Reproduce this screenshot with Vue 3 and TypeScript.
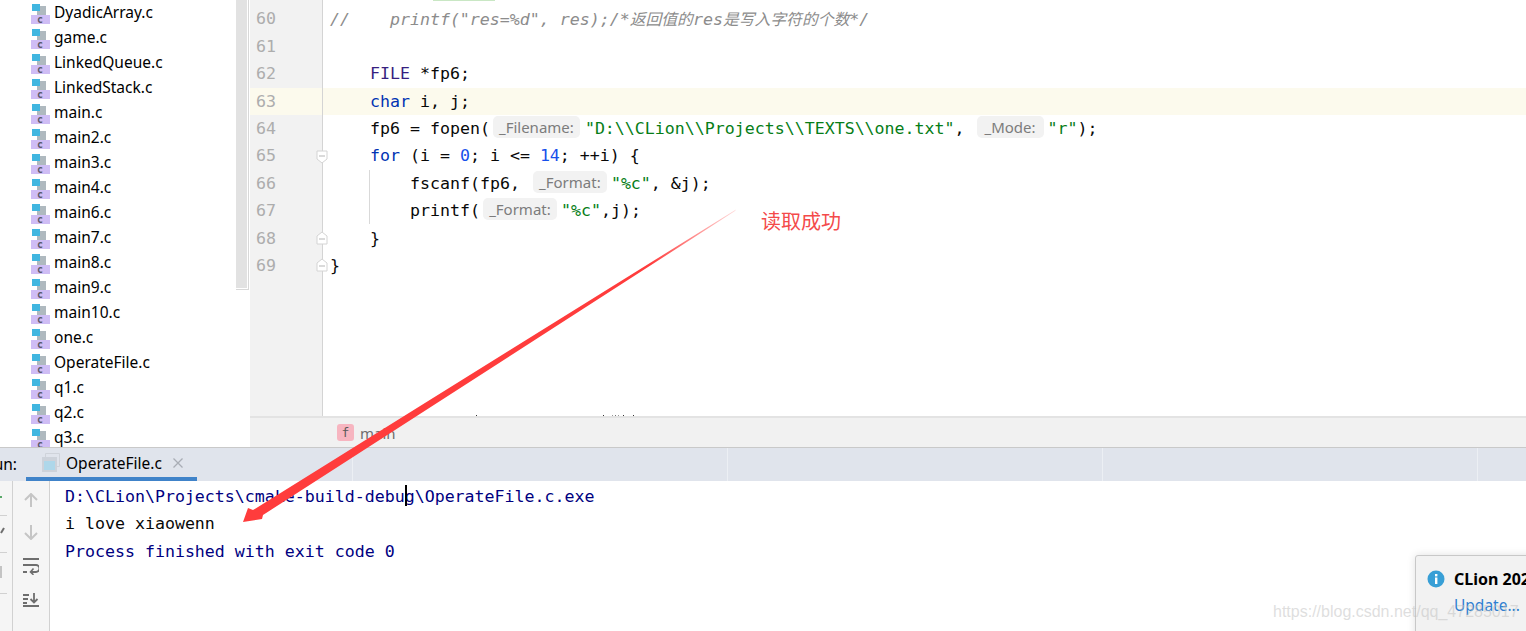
<script setup lang="ts">
const files: string[] = ['DyadicArray.c','game.c','LinkedQueue.c','LinkedStack.c','main.c','main2.c','main3.c','main4.c','main6.c','main7.c','main8.c','main9.c','main10.c','one.c','OperateFile.c','q1.c','q2.c','q3.c']
const lineNumbers: number[] = [60,61,62,63,64,65,66,67,68,69]
const cols: number[] = [1,2,3]
</script>

<template>
  <div class="app">
    <div class="top">
      <aside class="tree">
        <div v-for="f in files" :key="f" class="file">
          <svg class="ficon" width="20" height="22" viewBox="0 0 20 22">
            <rect x="6" y="3" width="9" height="9" fill="#afb9bf"/>
            <rect x="1" y="1" width="8" height="7" fill="#40b6e0"/>
            <rect x="0" y="12" width="19" height="9" fill="#cfbdf5"/>
            <text x="6" y="20" class="cletter">c</text>
          </svg>
          <span>{{ f }}</span>
        </div>
      </aside>
      <div class="scrollcol"><div class="thumb"></div></div>
      <main class="editorwrap">
        <div class="editor">
          <div class="gutter">
            <div v-for="n in lineNumbers" :key="n" class="num" :class="{ cur: n === 63 }">
              {{ n }}
              <svg v-if="n === 65" class="fold open" width="12" height="14" viewBox="0 0 12 14"><path d="M1 1h10v8l-5 4-5-4z" fill="#fff" stroke="#d4d4d4"/><path d="M3 6h6" stroke="#b5b5b5"/></svg>
              <svg v-if="n === 68 || n === 69" class="fold" width="12" height="14" viewBox="0 0 12 14"><path d="M1 13h10V5L6 1 1 5z" fill="#fff" stroke="#d4d4d4"/><path d="M3 8h6" stroke="#b5b5b5"/></svg>
            </div>
          </div>
          <div class="code">
            <div class="greenmark"></div>
            <div class="guide"></div>
            <i class="remnant"></i>
            <div class="ln cm">//&nbsp;&nbsp;&nbsp;&nbsp;printf("res=%d", res);/*<span class="cjk">返回值的</span>res<span class="cjk">是写入字符的个数</span>*/</div>
            <div class="ln"></div>
            <div class="ln i1"><span class="ty">FILE</span> *fp6;</div>
            <div class="ln i1 cur"><span class="kw">char</span> i, j;</div>
            <div class="ln i1">fp6 = fopen(<span class="hint h1">_Filename:</span><span class="st">"D:\\CLion\\Projects\\TEXTS\\one.txt"</span>,&nbsp;<span class="hint h2">_Mode:</span><span class="st">"r"</span>);</div>
            <div class="ln i1"><span class="kw">for</span> (i = <span class="nu">0</span>; i &lt;= <span class="nu">14</span>; ++i) {</div>
            <div class="ln i2">fscanf(fp6,&nbsp;<span class="hint h3">_Format:</span><span class="st">"%c"</span>, &amp;j);</div>
            <div class="ln i2">printf(<span class="hint h4">_Format:</span><span class="st">"%c"</span>,j);</div>
            <div class="ln i1">}</div>
            <div class="ln">}</div>
          </div>
        </div>
        <div class="crumb">
          <span class="fbadge">f</span>
          <span class="crumbtext">main</span>
        </div>
      </main>
    </div>

    <section class="tool">
      <header class="toolhead">
        <span class="runlabel">Run:</span>
        <div class="tab">
          <svg width="18" height="19" viewBox="0 0 18 19"><path d="M3.500 4V0.500h14v13H14" fill="none" stroke="#cfd3da"/><rect x="0" y="4" width="15" height="15" fill="#cdd2da"/><rect x="2" y="8" width="11" height="9" fill="#aed7ea"/></svg>
          <span class="tabname">OperateFile.c</span>
          <svg class="tabx" width="12" height="12" viewBox="0 0 12 12"><path d="M1.500 1.500l9 9M10.500 1.500l-9 9" stroke="#a9adb5" stroke-width="1.300"/></svg>
        </div>
        <div class="cellfirst"></div>
        <div v-for="c in cols" :key="c" class="cell"></div>
      </header>
      <div class="toolbody">
        <div class="strip">
          <i class="sep s1"></i><i class="sep s2"></i><i class="sep s3"></i>
          <svg class="stripicons" width="12" height="150" viewBox="0 0 12 150"><path d="M0 16h2" stroke="#59a869" stroke-width="2"/><path d="M1 52l3-5" stroke="#6e6e6e" stroke-width="2"/><rect x="0" y="85" width="2" height="12" fill="#c4c4c4"/></svg>
        </div>
        <div class="actions">
          <svg width="14" height="14" viewBox="0 0 14 14"><path d="M7 14V1.500M1 7l6-6 6 6" fill="none" stroke="#c5c5c5" stroke-width="2"/></svg>
          <svg width="14" height="15" viewBox="0 0 14 15"><path d="M7 0v13.500M1 8l6 6 6-6" fill="none" stroke="#c5c5c5" stroke-width="2"/></svg>
          <svg width="16" height="18" viewBox="0 0 16 18"><path d="M0 2h16M0 8h13a2.500 2.500 0 0 1 0 7H8M0 15h4" fill="none" stroke="#6e6e6e" stroke-width="2"/><path d="M10.500 11.500L7.500 15l3 2.800" fill="none" stroke="#6e6e6e" stroke-width="1.600"/></svg>
          <svg width="16" height="14" viewBox="0 0 16 14"><path d="M0 2h6M0 6h5M0 10h4M0 13h16M11 0v9M7.500 6l3.500 3.500L14.500 6" fill="none" stroke="#6e6e6e" stroke-width="1.800"/></svg>
        </div>
        <div class="console">
          <div class="out sys">D:\CLion\Projects\cmake-build-debug\OperateFile.c.exe</div>
          <div class="out">i love xiaowenn</div>
          <div class="out sys">Process finished with exit code 0</div>
          <i class="caret"></i>
        </div>
      </div>
    </section>

    <div class="toast">
      <div class="toasthead">
        <svg class="infoicon" width="18" height="18" viewBox="0 0 18 18"><circle cx="9" cy="9" r="8.500" fill="#389fd6"/><rect x="8" y="7.500" width="2.400" height="6.500" fill="#fff"/><rect x="8" y="4" width="2.400" height="2.400" fill="#fff"/></svg>
        <b>CLion 2020.3</b>
      </div>
      <a class="update">Update...</a>
    </div>

    <svg class="arrow" width="1526" height="631" viewBox="0 0 1526 631">
      <defs>
        <linearGradient id="ag" gradientUnits="userSpaceOnUse" x1="735" y1="210" x2="650" y2="265">
          <stop offset="0" stop-color="#ff3c3c" stop-opacity="0.2"/>
          <stop offset="1" stop-color="#ff3c3c"/>
        </linearGradient>
      </defs>
      <path d="M736 209.500 L735 211 L263 515 L262 519 L243 522 L248 508 L253 510 Z" fill="url(#ag)"/>
    </svg>
    <div class="note">读取成功</div>
    <div class="wm">https://blog.csdn.net/qq_47285017</div>
  </div>
</template>

<style>
html, body { margin: 0; background: #fff; }
</style>

<style scoped>
.app { position: relative; width: 1526px; height: 631px; overflow: hidden; background: #fff; font-family: "Noto Sans", "Open Sans", sans-serif; color: #000; }
.top { display: flex; height: 447px; }
.tree { width: 236px; flex: none; height: 447px; overflow: hidden; font-size: 15.5px; }
.file { display: flex; align-items: center; height: 25px; padding-left: 31px; gap: 3px; line-height: 25px; }
.ficon { flex: none; margin-top: 2px; }
.cletter { font: 700 10px "DejaVu Sans Mono", monospace; fill: #5a5a6a; }
.scrollcol { width: 14px; flex: none; background: #fff; }
.thumb { box-sizing: border-box; height: 290px; width: 13px; padding: 0 1px 1px 0; background: #e2e2e2; background-clip: content-box; border-right: 1px solid #d8d8d8; border-bottom: 1px solid #d8d8d8; }
.editorwrap { flex: 1; min-width: 0; display: flex; flex-direction: column; }
.editor { flex: none; height: 416px; display: flex; font: 16.6px/27.42px "DejaVu Sans Mono", monospace; overflow: hidden; }
.gutter { width: 72px; flex: none; background: #f2f2f2; border-right: 1px solid #d4d4d4; padding-top: 5.45px; color: #adadad; }
.num { position: relative; height: 27.42px; padding-left: 6px; }
.num.cur { background: #fcfaed; }
.fold { position: absolute; right: -6px; top: 6px; }
.fold.open { top: 8px; }
.code { position: relative; flex: 1; padding-top: 5.45px; white-space: nowrap; color: #080808; }
.greenmark { position: absolute; left: 110px; top: 0; width: 62px; height: 1px; background: #c9e7c4; }
.guide { position: absolute; left: 46px; top: 170px; width: 1px; height: 54px; background: #d9d9d9; }
.remnant { position: absolute; left: 153px; top: 415px; width: 1px; height: 1px; background: #333; box-shadow: 127px 0 #333, 136px 0 #999, 139px 0 #777, 142px 0 #999, 147px 0 #333, 157px 0 #333; }
.ln { height: 27.42px; padding-left: 7px; }
.ln.i1 { padding-left: 47px; }
.ln.i2 { padding-left: 87px; }
.ln.cur { background: #fcfaed; }
.cm { color: #8c8c8c; font-style: italic; }
.cjk { font-family: "Noto Sans CJK SC", sans-serif; font-size: 15.8px; }
.ty { color: #371f80; }
.kw { color: #0033b3; }
.nu { color: #1750eb; }
.st { color: #067d17; }
.hint { display: inline-block; font: 15px/22px "Noto Sans", sans-serif; color: #7c7c7c; background: #f2f2f2; border-radius: 5px; height: 22px; vertical-align: 1px; text-align: center; }
.h1 { width: 87px; margin: 0 5px 0 3px; }
.h2 { width: 67px; margin: 0 4px 0 2px; }
.h3 { width: 74px; margin: 0 4px 0 3px; }
.h4 { width: 74px; margin: 0 4px 0 3px; }
.crumb { flex: 1; background: #f1f1f1; border-top: 2px solid #e3e3e3; display: flex; align-items: center; padding-left: 87px; gap: 6px; }
.fbadge { width: 17px; height: 17px; border-radius: 3px; background: #f7b5c0; color: #5a5a5a; font: 13px/17px "DejaVu Sans Mono", monospace; text-align: center; }
.crumbtext { color: #6e6e6e; font-size: 15px; }
.tool { height: 184px; display: flex; flex-direction: column; }
.toolhead { height: 34px; flex: none; box-sizing: border-box; background: #e0e4ec; border-top: 1px solid #c9c9c9; display: flex; font-size: 15.5px; }
.runlabel { width: 42px; margin-left: -16px; flex: none; line-height: 33px; }
.tab { width: 171px; flex: none; height: 33px; box-sizing: border-box; border-bottom: 4px solid #4083c9; padding-left: 16px; display: flex; align-items: center; gap: 6px; }
.tabx { margin-left: 4px; }
.cellfirst { width: 155px; flex: none; border-right: 1px solid #eceff4; }
.cell { width: 374px; flex: none; border-right: 1px solid #eceff4; }
.toolbody { flex: 1; display: flex; }
.strip { position: relative; width: 12px; flex: none; background: #f5f5f5; border-right: 1px solid #d1d1d1; }
.sep { position: absolute; left: 0; width: 7px; height: 1px; background: #d1d1d1; }
.s1 { top: 34px; } .s2 { top: 71px; } .s3 { top: 112px; }
.stripicons { position: absolute; left: 0; top: 0; overflow: visible; }
.actions { width: 36px; flex: none; background: #f5f5f5; border-right: 1px solid #d1d1d1; display: flex; flex-direction: column; align-items: center; padding-top: 12px; gap: 17.5px; }
.console { position: relative; flex: 1; padding: 2px 0 0 15px; font: 16.6px/27.4px "DejaVu Sans Mono", monospace; color: #080808; white-space: pre; }
.out { height: 27.4px; }
.sys { color: #00007f; }
.caret { position: absolute; left: 355px; top: 4px; width: 2px; height: 21px; background: #000; }
.toast { position: absolute; left: 1415px; top: 555px; width: 130px; height: 90px; box-sizing: border-box; background: #f2f2f2; border: 1px solid #c8c8c8; border-radius: 3px; box-shadow: 0 0 8px rgba(0,0,0,.12); padding: 12px 0 0 11px; font-size: 15.5px; }
.toasthead { display: flex; align-items: center; gap: 9px; white-space: nowrap; }
.infoicon { flex: none; }
.toasthead b { font-size: 16px; }
.update { display: block; margin: 4px 0 0 27px; color: #2f7fd1; }
.arrow { position: absolute; left: 0; top: 0; pointer-events: none; }
.note { position: absolute; left: 761px; top: 207px; font: 20px/28px "Noto Sans CJK SC", sans-serif; color: #f44a4a; }
.wm { position: absolute; left: 1273px; top: 601px; font: 16px/22px "Liberation Sans", sans-serif; color: rgba(190,190,190,.5); white-space: nowrap; }
</style>
